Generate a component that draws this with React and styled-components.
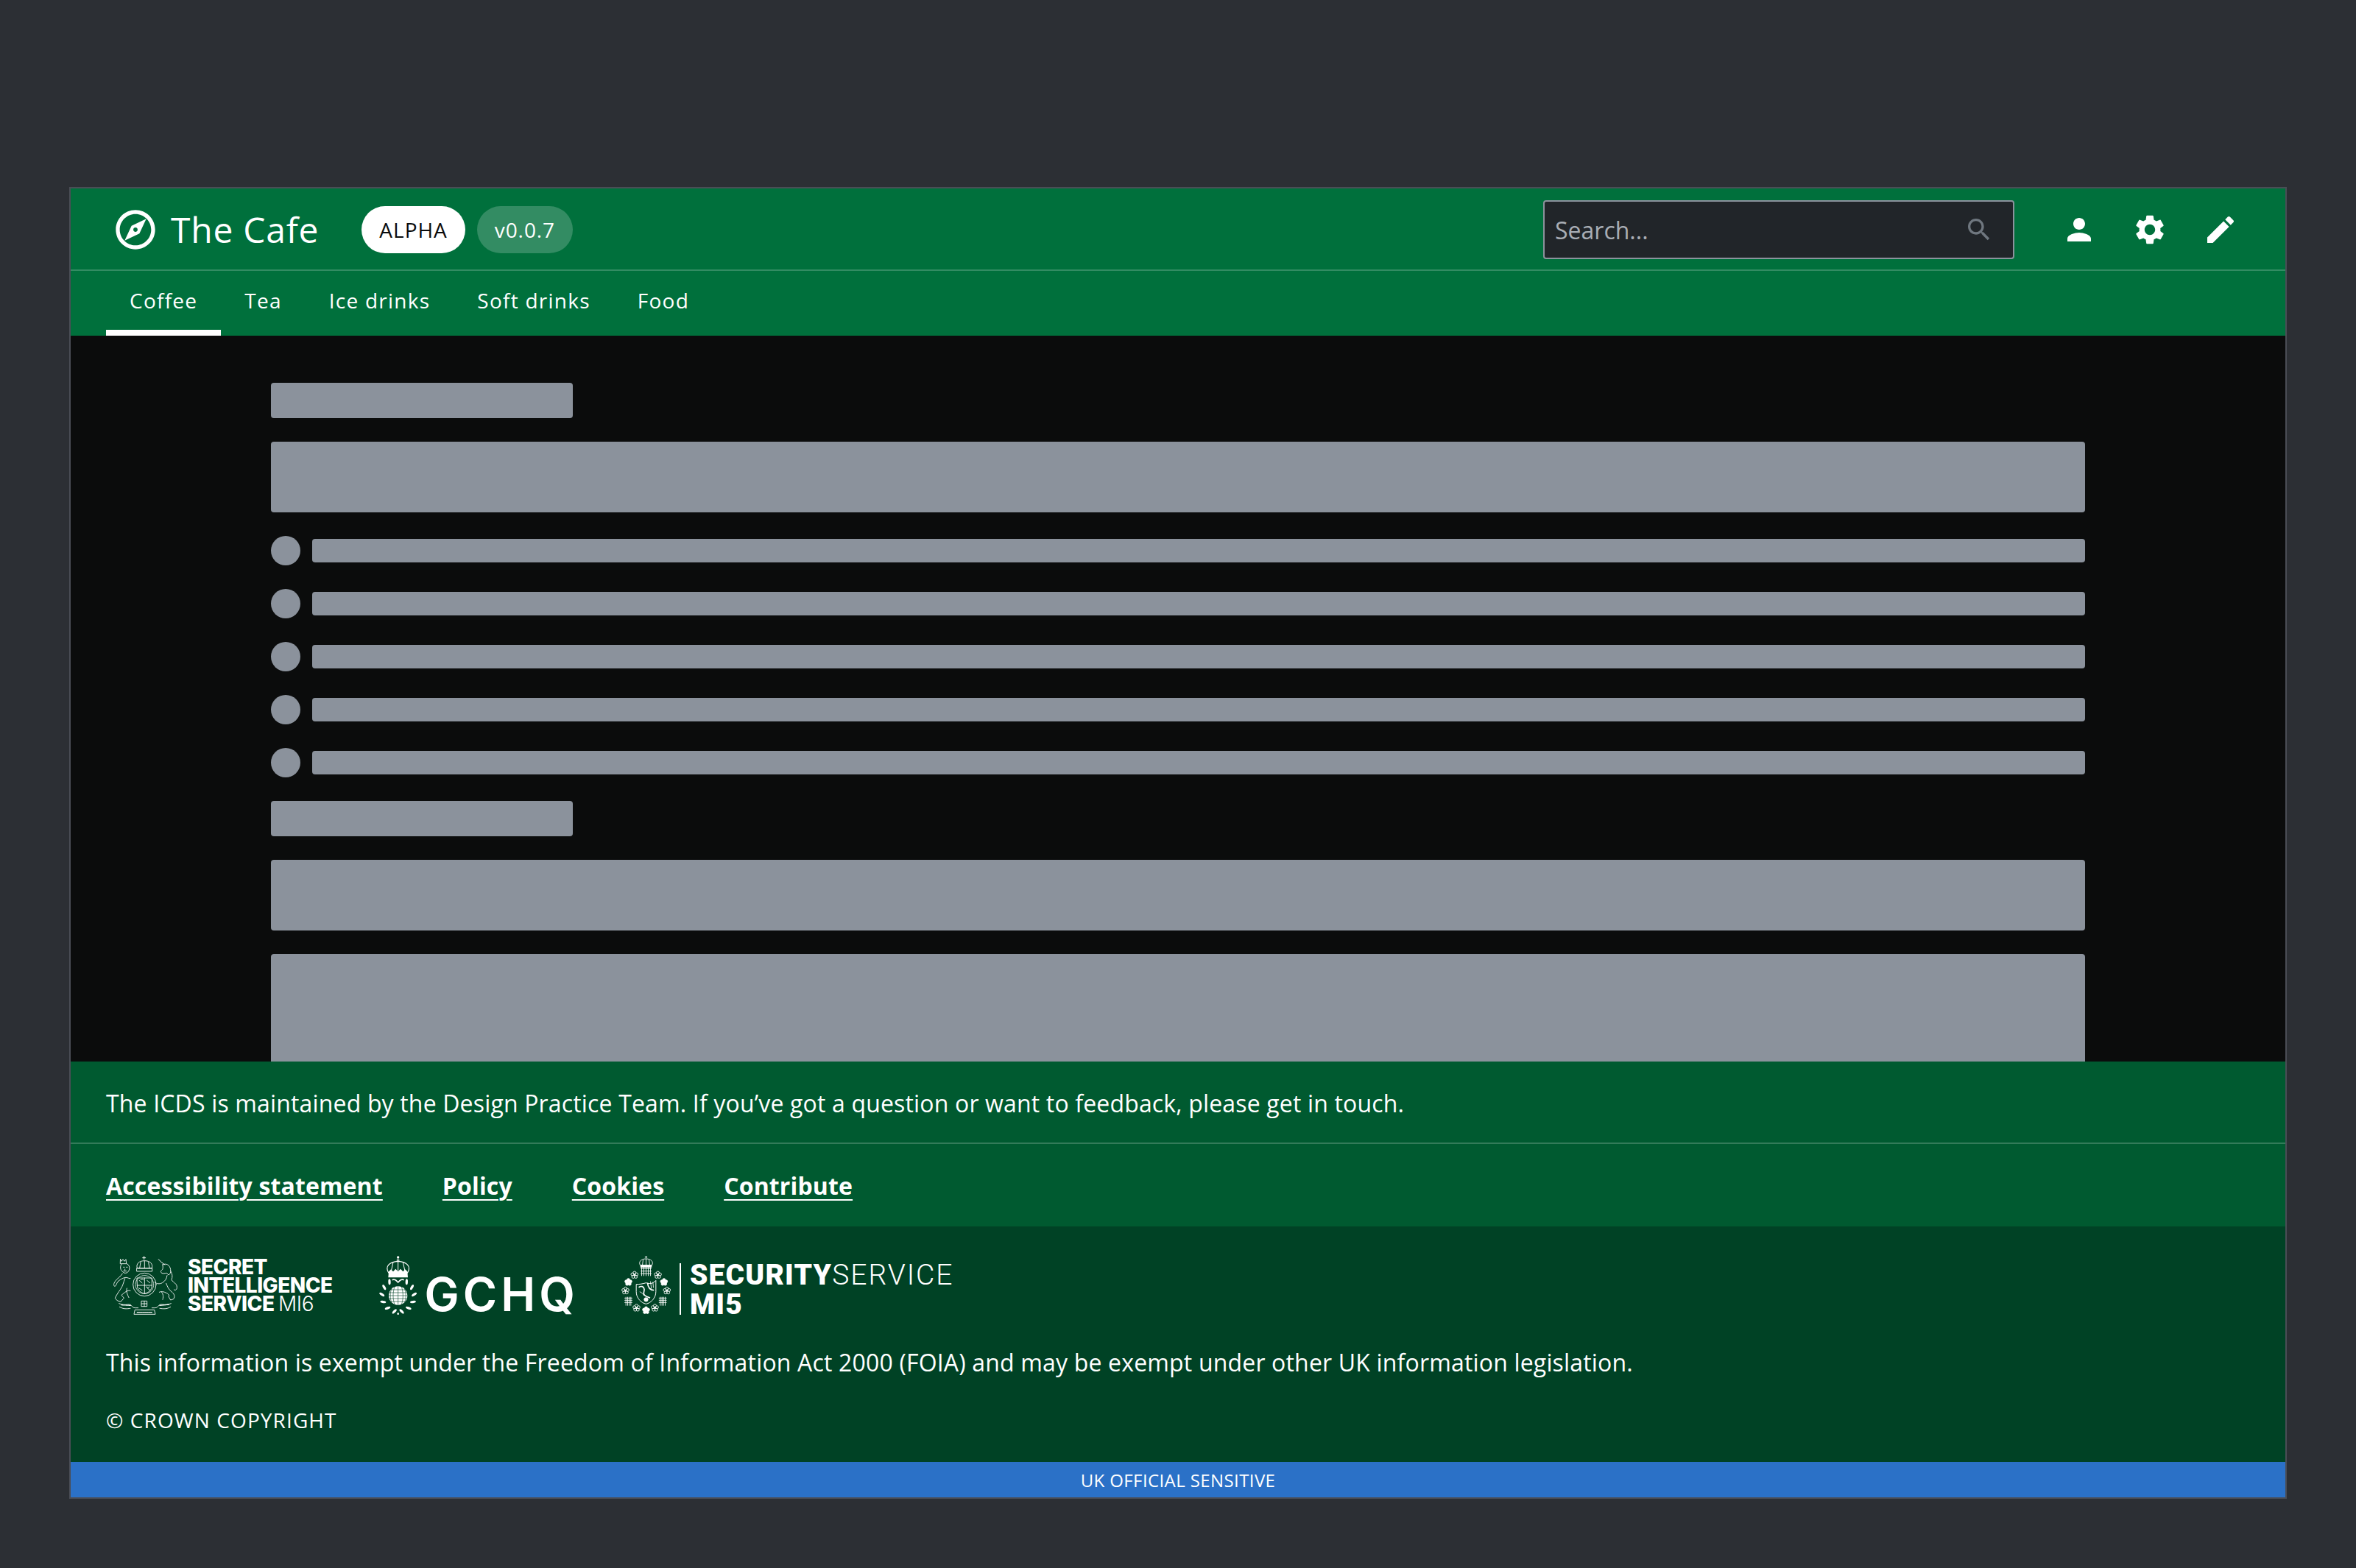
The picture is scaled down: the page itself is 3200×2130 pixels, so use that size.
import React from "react";
import styled, { createGlobalStyle } from "styled-components";

const Global = createGlobalStyle`
  html, body { margin: 0; padding: 0; background: #2c2f34; }
  * { box-sizing: border-box; }
  body { font-family: "Open Sans", "Noto Sans", sans-serif; color: #fff; }
`;

const Page = styled.div`
  min-height: 2130px;
  padding: 254px 94px 94px;
  background: #2c2f34;
`;
const Frame = styled.div`
  border: 2px solid #4a4d55;
  display: flex;
  flex-direction: column;
`;
const Header = styled.header`
  background: #00703c;
`;
const TopBar = styled.div`
  height: 112px;
  border-bottom: 2px solid rgba(255, 255, 255, 0.2);
  padding: 2px 64px 0 56px;
  display: flex;
  align-items: center;
`;
const Brand = styled.div`
  display: flex;
  align-items: center;
  gap: 16px;
  margin-right: 58px;
`;
const BrandName = styled.span`
  font-size: 48px;
  line-height: 64px;
  letter-spacing: 0.75px;
`;
const Pills = styled.div`
  display: flex;
  gap: 16px;
`;
const Pill = styled.span`
  height: 64px;
  border-radius: 32px;
  padding: 0 24px;
  display: flex;
  align-items: center;
  font-size: 28px;
  font-weight: ${(p) => (p.$light ? 500 : 400)};
  letter-spacing: ${(p) => (p.$light ? "1px" : "0.9px")};
  background: ${(p) => (p.$light ? "#fff" : "rgba(255,255,255,0.2)")};
  color: ${(p) => (p.$light ? "#0b0c0c" : "#fff")};
`;
const Search = styled.div`
  margin-left: auto;
  width: 640px;
  height: 80px;
  background: #212529;
  border: 2px solid #8b929c;
  border-radius: 4px;
  padding: 0 26px 0 14px;
  display: flex;
  align-items: center;
  justify-content: space-between;
`;
const Placeholder = styled.span`
  font-size: 32px;
  color: #a9aeb5;
`;
const IconRow = styled.div`
  display: flex;
  gap: 48px;
  margin-left: 64px;
`;
const Icon = styled.svg`
  display: block;
  flex: none;
  fill: ${(p) => p.$color || "#fff"};
`;
const Tabs = styled.nav`
  height: 88px;
  padding: 0 48px;
  display: flex;
`;
const Tab = styled.a`
  padding: 0 32px;
  display: flex;
  align-items: center;
  font-size: 28px;
  font-weight: 500;
  letter-spacing: 1.25px;
  color: #fff;
  border-bottom: 8px solid ${(p) => (p.$active ? "#fff" : "transparent")};
`;
const Main = styled.main`
  height: 986px;
  overflow: hidden;
  background: #0b0c0c;
  padding: 64px 272px 0;
  display: flex;
  flex-direction: column;
  gap: 32px;
`;
const Skeleton = styled.div`
  flex: ${(p) => (p.$fill ? "1" : "none")};
  width: ${(p) => p.$w || "100%"};
  height: ${(p) => p.$h}px;
  background: #8b929c;
  border-radius: ${(p) => (p.$round ? "50%" : "4px")};
`;
const Row = styled.div`
  flex: none;
  display: flex;
  align-items: center;
  gap: 16px;
`;
const Info = styled.div`
  height: 112px;
  background: #005a30;
  border-bottom: 2px solid rgba(255, 255, 255, 0.2);
  padding: 2px 48px 0;
  display: flex;
  align-items: center;
  font-size: 32px;
  letter-spacing: 0.16px;
`;
const Links = styled.div`
  height: 112px;
  background: #005a30;
  padding: 0 48px;
  display: flex;
  align-items: center;
  gap: 81px;
`;
const FootLink = styled.a`
  font-size: 32px;
  font-weight: 700;
  letter-spacing: 0.14px;
  color: #fff;
  text-decoration: underline;
  text-decoration-thickness: 2px;
  text-underline-offset: 6px;
`;
const Dark = styled.div`
  height: 320px;
  background: #004225;
  padding: 40px 48px 0;
`;
const LogoRow = styled.div`
  height: 80px;
  display: flex;
  align-items: flex-start;
`;
const Sis = styled.div`
  display: flex;
  align-items: center;
  gap: 14px;
  margin: 0 0 0 9px;
`;
const SisText = styled.div`
  font-family: Inter, "Liberation Sans", sans-serif;
  font-weight: 800;
  font-size: 28px;
  line-height: 25px;
  letter-spacing: -0.5px;
`;
const SisThin = styled.span`
  font-weight: 300;
`;
const Gchq = styled.div`
  display: flex;
  align-items: flex-start;
  gap: 9px;
  margin-left: 62px;
`;
const GchqText = styled.span`
  font-family: Inter, "Liberation Sans", sans-serif;
  font-size: 63px;
  font-weight: 600;
  line-height: 80px;
  letter-spacing: 5px;
  padding-top: 12px;
`;
const Mi5 = styled.div`
  display: flex;
  align-items: flex-start;
  margin-left: 58px;
`;
const Mi5Rule = styled.div`
  width: 2px;
  height: 70px;
  margin: 10px 12px 0 12px;
  background: #fff;
`;
const Mi5Text = styled.div`
  font-family: Roboto, "Liberation Sans", sans-serif;
  font-size: 39px;
  line-height: 40px;
  padding-top: 6px;
  white-space: nowrap;
`;
const Mi5Bold = styled.span`
  font-weight: 900;
  letter-spacing: 1.2px;
`;
const Mi5Light = styled.span`
  font-weight: 300;
  letter-spacing: 1.9px;
`;
const Exempt = styled.p`
  margin: 41px 0 0;
  font-size: 32px;
  line-height: 48px;
  letter-spacing: 0.17px;
`;
const Copy = styled.p`
  margin: 34px 0 0;
  font-size: 28px;
  font-weight: 500;
  line-height: 40px;
  letter-spacing: 1.1px;
`;
const Banner = styled.div`
  height: 48px;
  background: #2b71c7;
  display: flex;
  align-items: center;
  justify-content: center;
  font-size: 24px;
  font-weight: 500;
  letter-spacing: 0.4px;
`;

const I = ({ d, size = 48, color }) => (
  <Icon width={size} height={size} viewBox="0 0 24 24" $color={color}><path d={d} /></Icon>
);
const P = {
  explore: "M12 2C6.48 2 2 6.48 2 12s4.48 10 10 10 10-4.48 10-10S17.52 2 12 2zm0 18c-4.41 0-8-3.59-8-8s3.59-8 8-8 8 3.59 8 8-3.59 8-8 8zm-5.5-2.5l7.51-3.49L17.5 6.5 9.99 9.99 6.5 17.5zm5.5-6.6c.61 0 1.1.49 1.1 1.1s-.49 1.1-1.1 1.1-1.1-.49-1.1-1.1.49-1.1 1.1-1.1z",
  search: "M15.5 14h-.79l-.28-.27C15.41 12.59 16 11.11 16 9.5 16 5.91 13.09 3 9.5 3S3 5.91 3 9.5 5.91 16 9.5 16c1.61 0 3.09-.59 4.23-1.57l.27.28v.79l5 4.99L20.49 19l-4.99-5zm-6 0C7.01 14 5 11.99 5 9.5S7.01 5 9.5 5 14 7.01 14 9.5 11.99 14 9.5 14z",
  person: "M12 12c2.21 0 4-1.79 4-4s-1.79-4-4-4-4 1.79-4 4 1.79 4 4 4zm0 2c-2.67 0-8 1.34-8 4v2h16v-2c0-2.66-5.33-4-8-4z",
  gear: "M19.14,12.94c0.04-0.3,0.06-0.61,0.06-0.94c0-0.32-0.02-0.64-0.07-0.94l2.03-1.58c0.18-0.14,0.23-0.41,0.12-0.61 l-1.92-3.32c-0.12-0.22-0.37-0.29-0.59-0.22l-2.39,0.96c-0.5-0.38-1.03-0.7-1.62-0.94L14.4,2.81c-0.04-0.24-0.24-0.41-0.48-0.41 h-3.84c-0.24,0-0.43,0.17-0.47,0.41L9.25,5.35C8.66,5.59,8.12,5.92,7.63,6.29L5.24,5.33c-0.22-0.08-0.47,0-0.59,0.22L2.74,8.87 C2.62,9.08,2.66,9.34,2.86,9.48l2.03,1.58C4.84,11.36,4.8,11.69,4.8,12s0.02,0.64,0.07,0.94l-2.03,1.58 c-0.18,0.14-0.23,0.41-0.12,0.61l1.92,3.32c0.12,0.22,0.37,0.29,0.59,0.22l2.39-0.96c0.5,0.38,1.03,0.7,1.62,0.94l0.36,2.54 c0.05,0.24,0.24,0.41,0.48,0.41h3.84c0.24,0,0.44-0.17,0.47-0.41l0.36-2.54c0.59-0.24,1.13-0.56,1.62-0.94l2.39,0.96 c0.22,0.08,0.47,0,0.59-0.22l1.92-3.32c0.12-0.22,0.07-0.47-0.12-0.61L19.14,12.94z M12,15.6c-1.98,0-3.6-1.62-3.6-3.6 s1.62-3.6,3.6-3.6s3.6,1.62,3.6,3.6S13.98,15.6,12,15.6z",
  edit: "M3 17.25V21h3.75L17.81 9.94l-3.75-3.75L3 17.25zM20.71 7.04c.39-.39.39-1.02 0-1.41l-2.34-2.34c-.39-.39-1.02-.39-1.41 0l-1.83 1.83 3.75 3.75 1.83-1.83z",
};

const CrestSvg = styled.svg`
  display: block;
  flex: none;
`;

/* Royal arms, 3x coordinates of the reference */
const RoyalArms = () => (
  <CrestSvg width="88" height="80" viewBox="68 78 264 240" fill="none" stroke="#fff" strokeWidth="2.6" strokeLinejoin="round" strokeLinecap="round">
    {/* crown */}
    <path d="M196 80v12M190 86h12" strokeWidth="3" />
    <path d="M168 128c-6-18 8-30 30-30s36 12 30 30z" />
    <path d="M198 98v30M182 104l-4 24M214 104l4 24" />
    <rect x="167" y="128" width="62" height="13" />
    {/* garter + shield */}
    <circle cx="198" cy="195" r="47" />
    <circle cx="198" cy="195" r="37" strokeDasharray="3 3" />
    <path d="M168 168h60v30c0 20-14 30-30 34-16-4-30-14-30-34z" />
    <path d="M198 168v64M168 198h60M176 178l12 10M208 178l12 10M176 210l12 8M210 210l10 8" />
    <path d="M182 176l6-4 6 4M204 204l8 4 6-4" />
    {/* lion */}
    <path d="M100 92l4 8 6-8 6 8 6-8 2 18h-24z" />
    <path d="M104 112c-6 8-6 20 2 28 4 4 6 8 14 8s14-6 16-16c2-10-2-18-10-22" />
    <path d="M112 124h4M124 124h4M118 132v4M112 140h12" />
    <path d="M108 150c-8 14-22 20-30 32-8 12-6 20 0 20 6-6 6-14 14-22 8-6 20-14 30-14 8 0 14 6 18 4" />
    <path d="M118 170c-6 16-8 30-18 44-8 12-16 22-22 36 6 10 14 14 24 14l12-14c-4-6-8-8-10-12 12-10 24-22 36-18" />
    <path d="M126 210c-4 12 2 26 8 38" />
    {/* unicorn */}
    <path d="M255 92c8 10 16 16 26 22" strokeWidth="3" />
    <path d="M272 114c14-8 30 2 32 20 2 12-2 18-8 22l-8-8c-6 0-14 4-20 0-6-4-4-10 0-12 4-2 6-6 4-22z" />
    <path d="M304 140c8 10 8 24 4 36 8 12 22 14 22 30 0 10-6 14-12 10M290 158c-2 14-8 22-20 30-12 6-22 4-30-2" />
    <path d="M286 190c6 14 10 26 22 34 10 8 16 18 8 30l-12 4-8-14c4-6 0-8-4-12-10-6-24-12-34-6" />
    <path d="M268 226c8 10 6 22 4 30" />
    {/* motto */}
    <path d="M94 272c14 6 24 6 36 4 18-2 14 14 30 14h12M306 272c-14 6-24 6-36 4-18-2-14 14-30 14h-12" />
    <path d="M96 286c16 10 30 8 44 6M304 286c-16 10-30 8-44 6" />
    <path d="M104 278l38 2M260 280l38-4" strokeDasharray="5 3" strokeWidth="4" />
    <path d="M160 298h78l4 18h-86z" />
    <path d="M168 308h60" strokeDasharray="5 3" strokeWidth="4" />
    <rect x="186" y="262" width="22" height="22" />
    <path d="M197 262v22M186 273h22" />
  </CrestSvg>
);

const leaves = [];
for (let i = 0; i < 6; i++) {
  const a = (Math.PI / 180) * (-58 + i * 27);
  leaves.push({ x: 66 * Math.cos(a), y: 66 * Math.sin(a), r: (a * 180) / Math.PI });
}

/* GCHQ crest: crown, globe, wreath */
const GchqCrest = () => (
  <CrestSvg width="54" height="80" viewBox="72 78 162 240" fill="none" stroke="#fff" strokeWidth="3">
    <circle cx="152" cy="84" r="5" fill="#fff" stroke="none" />
    <path d="M152 90v10M146 96h12" />
    <path d="M114 148c-18-28 4-46 38-48 34 2 56 20 38 48" strokeWidth="3.5" />
    <path d="M152 100v40M132 104l-8 36M172 104l8 36" />
    <path d="M114 142l9-9 9 9 10-11 10 11 10-11 10 11 9-9 9 9 2 24h-80z" fill="#fff" stroke="none" />
    <path d="M128 176c10-5 16 2 24 10 8-8 14-15 24-10" strokeWidth="5" />
    <circle cx="152" cy="240" r="38" fill="#fff" stroke="none" />
    <g stroke="#004225" strokeWidth="1.8">
      <path d="M114 228h76M114 240h76M114 252h76M122 216h60M122 264h60" />
      <path d="M152 202v76M138 204c-8 22-8 50 0 72M166 204c8 22 8 50 0 72M125 213c-6 16-6 38 0 54M179 213c6 16 6 38 0 54" />
    </g>
    <g fill="#fff" stroke="none">
      {leaves.map((l, i) => (
        <React.Fragment key={i}>
          <ellipse cx={152 - l.x} cy={240 + l.y} rx="5" ry="12" transform={`rotate(${-l.r - 60} ${152 - l.x} ${240 + l.y})`} />
          <ellipse cx={152 + l.x} cy={240 + l.y} rx="5" ry="12" transform={`rotate(${l.r + 60} ${152 + l.x} ${240 + l.y})`} />
        </React.Fragment>
      ))}
      <circle cx="152" cy="314" r="4" />
    </g>
  </CrestSvg>
);

const Rose = ({ x, y, filled }) => (
  <g>
    {[0, 72, 144, 216, 288].map((a) => (
      <circle
        key={a}
        cx={x + 9 * Math.sin((a * Math.PI) / 180)}
        cy={y - 9 * Math.cos((a * Math.PI) / 180)}
        r="6"
        fill={filled ? "#fff" : "none"}
      />
    ))}
    <circle cx={x} cy={y} r="3" fill="#fff" />
  </g>
);
const Grate = ({ x, y }) => (
  <path d={`M${x - 16} ${y - 13}h32M${x - 16} ${y - 4}h32M${x - 16} ${y + 5}h32M${x - 10} ${y - 18}v36M${x - 3} ${y - 18}v36M${x + 3} ${y - 18}v36M${x + 10} ${y - 18}v36`} />
);

/* Security Service crest */
const Mi5Crest = () => (
  <CrestSvg width="67" height="80" viewBox="72 80 200 240" fill="none" stroke="#fff" strokeWidth="2.6">
    <path d="M172 80v10M167 85h10" />
    <path d="M148 118c-8-14 4-26 24-26s32 12 24 26zM172 92v26M160 96l-3 22M184 96l3 22" />
    <rect x="150" y="118" width="44" height="8" fill="#fff" />
    <path d="M150 132h44M150 142h44M150 152h44M154 126v36M163 126v36M172 126v36M181 126v36M190 126v36" />
    <Rose x={125} y={158} />
    <Rose x={220} y={158} />
    <Rose x={100} y={187} filled />
    <Rose x={245} y={187} filled />
    <Rose x={88} y={222} />
    <Rose x={257} y={222} />
    <Rose x={133} y={292} />
    <Rose x={208} y={292} />
    <Rose x={172} y={302} filled />
    <Grate x={100} y={265} />
    <Grate x={240} y={265} />
    <path d="M132 196c14 0 26-2 40-6 14 4 26 6 40-10v46c0 26-20 46-40 50-20-4-40-24-40-50z" strokeWidth="3" />
    <path d="M142 208c10-6 20-4 22 6 4 10-6 14 0 24 6 10 18 8 24 14M178 190c2 20 12 30 26 30" strokeWidth="5" />
    <path d="M190 184l4 30M200 186l2 24M146 226c8 4 14 8 18 16" />
    <circle cx="172" cy="258" r="8" fill="#fff" />
  </CrestSvg>
);

const ITEMS = [0, 1, 2, 3, 4];

export default function App() {
  return (
    <Page>
      <Global />
      <Frame>
        <Header>
          <TopBar>
            <Brand>
              <I d={P.explore} size={64} />
              <BrandName>The Cafe</BrandName>
            </Brand>
            <Pills>
              <Pill $light>ALPHA</Pill>
              <Pill>v0.0.7</Pill>
            </Pills>
            <Search>
              <Placeholder>Search...</Placeholder>
              <I d={P.search} size={40} color="#6f777f" />
            </Search>
            <IconRow>
              <I d={P.person} />
              <I d={P.gear} />
              <I d={P.edit} />
            </IconRow>
          </TopBar>
          <Tabs>
            <Tab $active>Coffee</Tab>
            <Tab>Tea</Tab>
            <Tab>Ice drinks</Tab>
            <Tab>Soft drinks</Tab>
            <Tab>Food</Tab>
          </Tabs>
        </Header>
        <Main>
          <Skeleton $w="410px" $h={48} />
          <Skeleton $h={96} />
          {ITEMS.map((i) => (
            <Row key={i}>
              <Skeleton $w="40px" $h={40} $round />
              <Skeleton $fill $h={32} />
            </Row>
          ))}
          <Skeleton $w="410px" $h={48} />
          <Skeleton $h={96} />
          <Skeleton $h={200} />
        </Main>
        <footer>
          <Info>The ICDS is maintained by the Design Practice Team. If you’ve got a question or want to feedback, please get in touch.</Info>
          <Links>
            <FootLink>Accessibility statement</FootLink>
            <FootLink>Policy</FootLink>
            <FootLink>Cookies</FootLink>
            <FootLink>Contribute</FootLink>
          </Links>
          <Dark>
            <LogoRow>
              <Sis>
                <RoyalArms />
                <SisText>
                  SECRET<br />INTELLIGENCE<br />SERVICE <SisThin>MI6</SisThin>
                </SisText>
              </Sis>
              <Gchq>
                <GchqCrest />
                <GchqText>GCHQ</GchqText>
              </Gchq>
              <Mi5>
                <Mi5Crest />
                <Mi5Rule />
                <Mi5Text>
                  <Mi5Bold>SECURITY</Mi5Bold><Mi5Light>SERVICE</Mi5Light><br /><Mi5Bold>MI5</Mi5Bold>
                </Mi5Text>
              </Mi5>
            </LogoRow>
            <Exempt>This information is exempt under the Freedom of Information Act 2000 (FOIA) and may be exempt under other UK information legislation.</Exempt>
            <Copy>© CROWN COPYRIGHT</Copy>
          </Dark>
          <Banner>UK OFFICIAL SENSITIVE</Banner>
        </footer>
      </Frame>
    </Page>
  );
}
